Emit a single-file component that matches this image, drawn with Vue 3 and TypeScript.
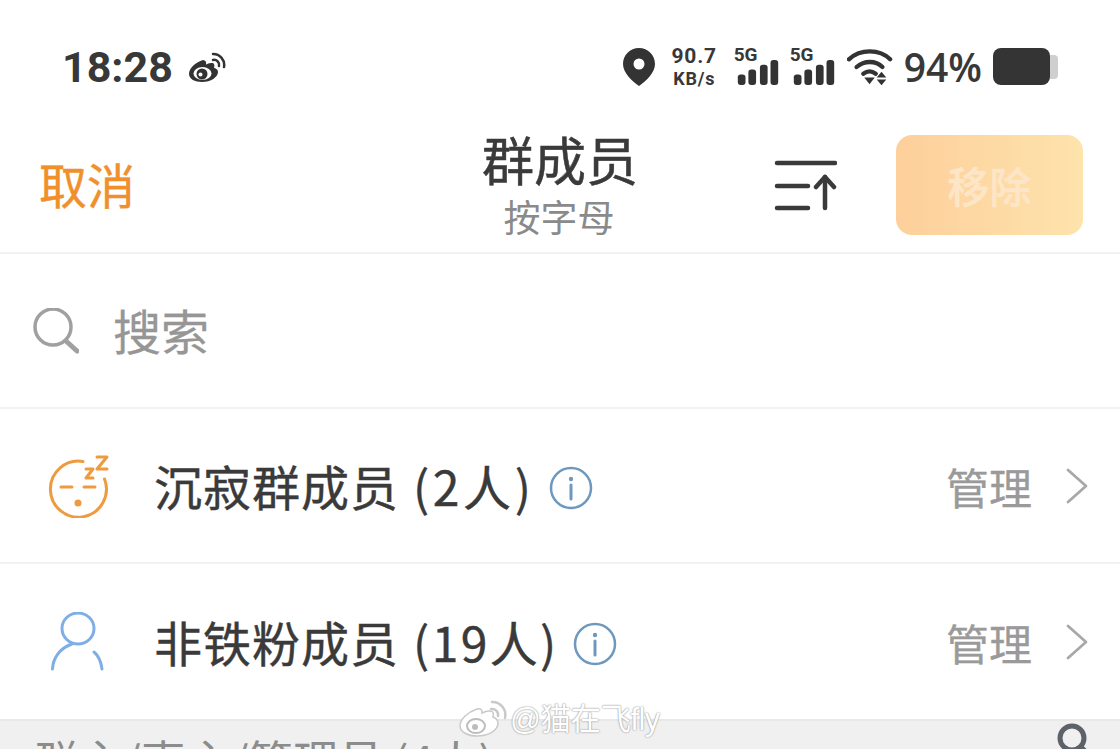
<script setup lang="ts">
interface MemberRow {
  name: string
  count: string
}

const rows: MemberRow[] = [
  { name: '沉寂群成员', count: '(2人)' },
  { name: '非铁粉成员', count: '(19人)' },
]
const signals = [0, 1]
</script>

<template>
  <div class="screen">
    <div class="status-bar">
      <div class="status-left">
        <span class="clock">18:28</span>
        <svg class="weibo" width="38" height="34" viewBox="0 0 38 32">
          <path d="M15 8C8 10 1 16 1 22c0 5 6 8 13 8 9 0 16-5 16-10 0-3-3-4-4-4 1-3 0-5-2-5-2-.4-5 1-6 1.500 .5-2 0-4-3-4.500z" fill="#333" />
          <ellipse cx="14.500" cy="21.500" rx="9" ry="6.500" fill="#fff" />
          <circle cx="14" cy="22" r="5.500" fill="#333" />
          <circle cx="12.500" cy="22.500" r="2" fill="#fff" />
          <path d="M25 8a5 5 0 0 1 6 6" fill="none" stroke="#333" stroke-width="2.500" stroke-linecap="round" />
          <path d="M25 2a11 11 0 0 1 11 13" fill="none" stroke="#333" stroke-width="2.500" stroke-linecap="round" />
        </svg>
      </div>
      <div class="status-right">
        <svg class="pin" width="32" height="38" viewBox="0 0 32 38">
          <path fill-rule="evenodd" d="M16 0C7 0 0 7 0 16c0 9 9 17 16 22 7-5 16-13 16-22C32 7 25 0 16 0zm0 10.500a5.500 5.500 0 1 1 0 11 5.500 5.500 0 0 1 0-11z" fill="#333" />
        </svg>
        <div class="speed"><span>90.7</span><span>KB/s</span></div>
        <div v-for="s in signals" :key="s" class="signal">
          <span class="net">5G</span>
          <svg width="42" height="25" viewBox="0 0 42 26">
            <rect x="0" y="15" width="8" height="11" rx="3" fill="#333" />
            <rect x="11" y="10" width="8" height="16" rx="3" fill="#333" />
            <rect x="23" y="5" width="8" height="21" rx="3" fill="#333" />
            <rect x="34" y="0" width="8" height="26" rx="3" fill="#333" />
          </svg>
        </div>
        <svg class="wifi" width="46" height="38" viewBox="0 0 48 38">
          <g fill="none" stroke="#333" stroke-width="4.500" stroke-linecap="round">
            <path d="M2 11C14 0 34 0 45 11" />
            <path d="M10 19c8-7 20-7 27 0" />
            <path d="M17 26c4-3 9-3 13 0" />
          </g>
          <path d="M18 30h11l-5.500 7z" fill="#333" />
          <path d="M36 24l5 6H31zM31 32h10l-5 6z" fill="#333" />
        </svg>
        <span class="battery-pct">94%</span>
        <div class="battery">
          <div class="battery-body"></div>
          <div class="battery-cap"></div>
        </div>
      </div>
    </div>

    <header class="nav">
      <span class="cancel">取消</span>
      <div class="nav-title">
        <span class="title">群成员</span>
        <span class="subtitle">按字母</span>
      </div>
      <div class="nav-actions">
        <svg class="sort" width="64" height="54" viewBox="0 0 64 54">
          <g fill="none" stroke="#3a3a3a" stroke-width="4.500" stroke-linecap="round" stroke-linejoin="round">
            <path d="M4 5h58" />
            <path d="M4 28h31" />
            <path d="M4 50h31" />
            <path d="M52 50V19" />
            <path d="M43 29l9-10 9 10" />
          </g>
        </svg>
        <button class="remove">移除</button>
      </div>
    </header>

    <div class="search">
      <svg width="46" height="46" viewBox="0 0 46 46">
        <circle cx="20" cy="19" r="18" fill="none" stroke="#a0a0a0" stroke-width="3.500" />
        <path d="M33 33l11 10" fill="none" stroke="#a0a0a0" stroke-width="5" stroke-linecap="round" />
      </svg>
      <span class="search-text">搜索</span>
    </div>

    <div v-for="(row, i) in rows" :key="row.name" class="row">
      <div class="row-icon">
        <svg v-if="i === 0" width="62" height="64" viewBox="0 0 62 64">
          <g fill="none" stroke="#ee9a3e" stroke-width="3" stroke-linecap="round" stroke-linejoin="round">
            <path d="M35 7.500A28 28 0 1 0 56.500 25" />
            <path d="M13 33h11M36 33h11" />
            <path d="M38 15h7l-7 9h7" />
            <path d="M49 3h10l-10 12h10" />
          </g>
          <circle cx="30" cy="49" r="3.500" fill="#ee9a3e" />
        </svg>
        <svg v-else width="60" height="60" viewBox="0 0 60 60">
          <g fill="none" stroke="#7faee6" stroke-width="3" stroke-linecap="round">
            <ellipse cx="30" cy="16.500" rx="16" ry="15.500" />
            <path d="M24 32C12 36 5 46 4.500 57" />
            <path d="M46 40c5 4 7 10 8 17" />
          </g>
        </svg>
      </div>
      <span class="row-label">{{ row.name }}</span>
      <span class="row-count">{{ row.count }}</span>
      <svg class="info" width="44" height="44" viewBox="0 0 44 44">
        <circle cx="22" cy="22" r="20" fill="none" stroke="#6f98be" stroke-width="2.500" />
        <circle cx="22" cy="13" r="2.200" fill="#6f98be" />
        <path d="M22 19v14" stroke="#6f98be" stroke-width="3" stroke-linecap="round" />
      </svg>
      <span class="manage">管理</span>
      <svg class="chevron" width="22" height="36" viewBox="0 0 22 36">
        <path d="M2 2l18 16L2 34" fill="none" stroke="#a8a8a8" stroke-width="2.800" stroke-linecap="round" stroke-linejoin="round" />
      </svg>
    </div>

    <div class="section">
      <span class="section-text">群主/声主/管理员 (4人)</span>
      <svg class="section-search" width="34" height="34" viewBox="0 0 34 34">
        <circle cx="15" cy="15" r="12" fill="none" stroke="#5c6268" stroke-width="5" />
        <path d="M24 24l8 8" stroke="#5c6268" stroke-width="5" stroke-linecap="round" />
      </svg>
    </div>

    <div class="watermark">
      <svg width="50" height="38" viewBox="0 0 50 38">
        <path d="M19 9C10 12 2 19 2 26c0 6 8 10 17 10 12 0 21-6 21-13 0-4-3-5-5-6 1-4 0-6-3-6-3-.5-6 1-8 2 .5-3-1-5-5-4z" fill="#fff" stroke="#c9c9c9" stroke-width="1.500" />
        <ellipse cx="18" cy="26" rx="9" ry="7" fill="none" stroke="#bdbdbd" stroke-width="2" />
        <circle cx="17" cy="27" r="3" fill="#bdbdbd" />
        <path d="M33 9a6 6 0 0 1 7 7M34 2a13 13 0 0 1 13 16" fill="none" stroke="#c9c9c9" stroke-width="2.500" stroke-linecap="round" />
      </svg>
      <span class="watermark-text">@猫在飞fly</span>
    </div>
  </div>
</template>

<style scoped>
.screen {
  position: relative;
  width: 1120px;
  height: 749px;
  overflow: hidden;
  background: #fff;
  font-family: "Noto Sans CJK SC", "Noto Sans", sans-serif;
  color: #3a3a3a;
}

.status-bar {
  height: 117px;
  display: flex;
  align-items: center;
  justify-content: space-between;
  padding: 33px 62px 17px 62px;
  box-sizing: border-box;
}

.status-left {
  display: flex;
  align-items: center;
  gap: 15px;
}

.clock {
  font-family: Roboto, sans-serif;
  font-weight: 700;
  font-size: 43px;
  line-height: 50px;
  color: #383838;
}

.weibo {
  margin-top: 2px;
}

.status-right {
  display: flex;
  align-items: center;
}

.status-right > * {
  flex: none;
}

.speed {
  width: 47px;
  display: flex;
  flex-direction: column;
  align-items: center;
  margin-left: 16px;
  font-family: Roboto, sans-serif;
  font-weight: 700;
  font-size: 21px;
  line-height: 24px;
  letter-spacing: 0.8px;
  color: #383838;
}

.speed span:last-child {
  font-size: 18px;
  line-height: 22px;
}

.signal {
  display: flex;
  flex-direction: column;
  margin-left: 16px;
  height: 38px;
  position: relative;
  width: 44px;
}

.signal + .signal {
  margin-left: 12px;
}

.signal svg {
  position: absolute;
  bottom: 1px;
  left: 3px;
}

.net {
  font-family: Roboto, sans-serif;
  font-weight: 700;
  font-size: 19px;
  line-height: 17px;
  margin-top: -2px;
  color: #383838;
}

.wifi {
  margin-left: 13px;
}

.battery-pct {
  font-family: "Open Sans", sans-serif;
  font-size: 39px;
  font-weight: 600;
  line-height: 44px;
  margin-left: 11px;
  color: #383838;
}

.battery {
  display: flex;
  align-items: center;
  margin-left: 11px;
}

.battery-body {
  width: 57px;
  height: 37px;
  border-radius: 8px;
  background: #343434;
}

.battery-cap {
  width: 8px;
  height: 24px;
  border-radius: 0 4px 4px 0;
  background: #cfcfcf;
}

.nav {
  position: relative;
  height: 137px;
  box-sizing: border-box;
  border-bottom: 2px solid #f2f2f2;
  display: flex;
  align-items: center;
  justify-content: space-between;
  padding: 0 37px 0 39px;
}

.cancel {
  font-size: 48px;
  line-height: 60px;
  margin-top: -4px;
  color: #f0902c;
  -webkit-text-stroke: 0.4px #f0902c;
}

.nav-title {
  position: absolute;
  left: 0;
  right: 0;
  top: 14px;
  display: flex;
  flex-direction: column;
  align-items: center;
}

.title {
  font-size: 52px;
  line-height: 56px;
  color: #3a3a3a;
  -webkit-text-stroke: 0.5px #3a3a3a;
}

.subtitle {
  font-size: 37px;
  line-height: 40px;
  margin: 9px 0 0 -2px;
  color: #8a8a8a;
}

.nav-actions {
  position: relative;
  display: flex;
  align-items: center;
  gap: 59px;
}

.remove {
  width: 187px;
  height: 100px;
  border: 0;
  padding: 0;
  border-radius: 16px;
  background: linear-gradient(90deg, #fdcf9b, #fee3ac);
  color: #fde6c8;
  font-family: inherit;
  font-size: 42px;
  font-weight: 500;
  -webkit-text-stroke: 0.5px #fde6c8;
}

.search {
  height: 155px;
  box-sizing: border-box;
  border-bottom: 2px solid #f2f2f2;
  display: flex;
  align-items: center;
  padding-left: 33px;
  gap: 34px;
}

.search-text {
  font-size: 48px;
  line-height: 60px;
  margin-top: -3px;
  color: #969696;
  -webkit-text-stroke: 0.3px #969696;
}

.row {
  height: 155px;
  box-sizing: border-box;
  border-bottom: 2px solid #f2f2f2;
  display: flex;
  align-items: center;
  padding: 0 32px 0 48px;
}

.row + .row {
  border-bottom: 0;
}

.row-icon {
  width: 106px;
  display: flex;
  align-items: center;
}

.row-label {
  font-size: 48px;
  line-height: 60px;
  margin-top: -2px;
  letter-spacing: 1px;
  color: #3a3a3a;
  -webkit-text-stroke: 0.4px #3a3a3a;
}

.row-count {
  margin: -2px 0 0 14px;
  font-size: 48px;
  line-height: 60px;
  letter-spacing: 3.6px;
  color: #3a3a3a;
  -webkit-text-stroke: 0.4px #3a3a3a;
}

.row + .row .row-count {
  letter-spacing: 2.4px;
}

.info {
  margin-left: 14px;
  margin-top: 4px;
}

.manage {
  margin-left: auto;
  font-size: 43px;
  line-height: 56px;
  color: #9a9a9a;
  -webkit-text-stroke: 0.3px #9a9a9a;
}

.chevron {
  margin-left: 34px;
}

.section {
  position: relative;
  height: 40px;
  background: #f0f0f0;
  border-top: 2px solid #e8e8e8;
  padding-left: 33px;
  overflow: hidden;
}

.section-text {
  display: block;
  font-size: 45px;
  line-height: 56px;
  margin-top: 11px;
  color: #8c8c8c;
}

.section-search {
  position: absolute;
  top: 2px;
  right: 29px;
}

.watermark {
  position: absolute;
  left: 458px;
  top: 700px;
  display: flex;
  align-items: center;
  gap: 2px;
}

.watermark-text {
  font-family: "Liberation Sans", "Noto Sans CJK SC", sans-serif;
  font-size: 30.500px;
  line-height: 38px;
  letter-spacing: -0.5px;
  color: #fff;
  text-shadow: 0 0 2px #9a9a9a, 0 0 1px #9a9a9a;
}
</style>
